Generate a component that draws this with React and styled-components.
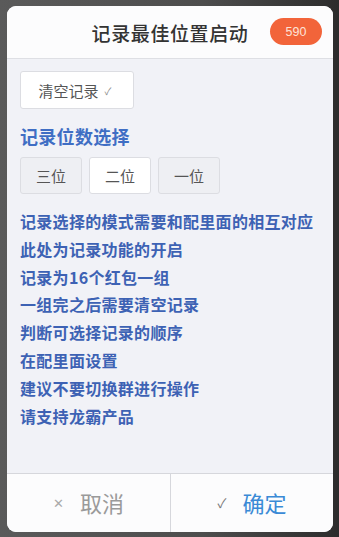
import React, { useState } from "react";
import styled, { createGlobalStyle } from "styled-components";

const Global = createGlobalStyle`
  html, body { margin: 0; padding: 0; background: #4f4f4f; }
  body { width: 339px; height: 537px; overflow: hidden; font-family: "Noto Sans CJK SC", "Noto Sans", sans-serif; }
`;

const Page = styled.div`
  width: 339px;
  height: 537px;
  padding: 6px 6px 5px 7px;
  box-sizing: border-box;
  background: linear-gradient(90deg, #5a5a5a 0%, #4d4d4d 60%, #2c2c2c 100%);
`;

const Dialog = styled.div`
  width: 326px;
  height: 526px;
  background: #f1f2f7;
  border-radius: 9px;
  overflow: hidden;
  display: flex;
  flex-direction: column;
`;

const Header = styled.div`
  position: relative;
  height: 52px;
  flex: none;
  background: #fcfcfd;
  border-bottom: 1px solid #dedfe4;
  display: flex;
  align-items: center;
  justify-content: center;
`;

const Title = styled.div`
  font-size: 19px;
  color: #333;
  letter-spacing: 0.6px;
  font-weight: 500;
`;

const Badge = styled.div`
  position: absolute;
  right: 11px;
  top: 12px;
  width: 52px;
  height: 27px;
  border-radius: 14px;
  background: #f2643a;
  color: #fde3d8;
  font-family: "Liberation Sans", Arial, sans-serif;
  font-size: 12.5px;
  display: flex;
  align-items: center;
  justify-content: center;
`;

const Body = styled.div`
  flex: 1;
  padding: 12px 13px 0;
  display: flex;
  flex-direction: column;
  align-items: flex-start;
`;

const ClearButton = styled.button`
  width: 114px;
  height: 38px;
  background: #fff;
  border: 1px solid #dcdde2;
  border-radius: 3px;
  font-family: inherit;
  font-size: 15px;
  color: #555;
  display: flex;
  align-items: center;
  justify-content: center;
  gap: 6px;
  padding: 0 4px 0 0;
  cursor: pointer;
`;

const SmallCheck = styled.span`
  font-size: 10px;
  color: #888;
`;

const SectionTitle = styled.div`
  margin-top: 14px;
  font-size: 18px;
  line-height: 26px;
  font-weight: 700;
  color: #3f6ec4;
  letter-spacing: 0.3px;
`;

const Options = styled.div`
  margin-top: 8px;
  display: flex;
  gap: 7px;
`;

const Option = styled.button`
  width: 62px;
  height: 37px;
  border: 1px solid #dcdde2;
  border-radius: 3px;
  background: ${(p) => (p.$active ? "#ffffff" : "#eeeff3")};
  font-family: inherit;
  font-size: 15px;
  color: #555;
  padding: 0;
  cursor: pointer;
`;

const Notes = styled.div`
  margin-top: 14px;
  display: flex;
  flex-direction: column;
`;

const Note = styled.div`
  font-size: 16px;
  line-height: 27.8px;
  font-weight: 700;
  color: #3d62b4;
  letter-spacing: 0.3px;
  white-space: nowrap;
`;

const Footer = styled.div`
  height: 58px;
  flex: none;
  border-top: 1px solid #d6d7dc;
  background: #fcfcfd;
  display: grid;
  grid-template-columns: 163px 1fr;
`;

const FooterButton = styled.button`
  border: none;
  border-left: ${(p) => (p.$divider ? "1px solid #d6d7dc" : "none")};
  background: transparent;
  font-family: inherit;
  font-size: 22px;
  color: ${(p) => p.$color};
  display: flex;
  align-items: center;
  justify-content: center;
  gap: 16px;
  padding: 0 0 2px 0;
  cursor: pointer;
`;

const Mark = styled.span`
  font-size: 13px;
  color: ${(p) => p.$color};
`;

const notes = [
  "记录选择的模式需要和配里面的相互对应",
  "此处为记录功能的开启",
  "记录为16个红包一组",
  "一组完之后需要清空记录",
  "判断可选择记录的顺序",
  "在配里面设置",
  "建议不要切换群进行操作",
  "请支持龙霸产品",
];

export default function App() {
  const [sel, setSel] = useState(1);
  return (
    <>
      <Global />
      <Page>
        <Dialog>
          <Header>
            <Title>记录最佳位置启动</Title>
            <Badge>590</Badge>
          </Header>
          <Body>
            <ClearButton>
              清空记录<SmallCheck>✓</SmallCheck>
            </ClearButton>
            <SectionTitle>记录位数选择</SectionTitle>
            <Options>
              {["三位", "二位", "一位"].map((t, i) => (
                <Option key={t} $active={sel === i} onClick={() => setSel(i)}>
                  {t}
                </Option>
              ))}
            </Options>
            <Notes>
              {notes.map((n) => (
                <Note key={n}>{n}</Note>
              ))}
            </Notes>
          </Body>
          <Footer>
            <FooterButton $color="#9a9a9a">
              <Mark $color="#aaa">✕</Mark>取消
            </FooterButton>
            <FooterButton $divider $color="#3a8ad6">
              <Mark $color="#777">✓</Mark>确定
            </FooterButton>
          </Footer>
        </Dialog>
      </Page>
    </>
  );
}
